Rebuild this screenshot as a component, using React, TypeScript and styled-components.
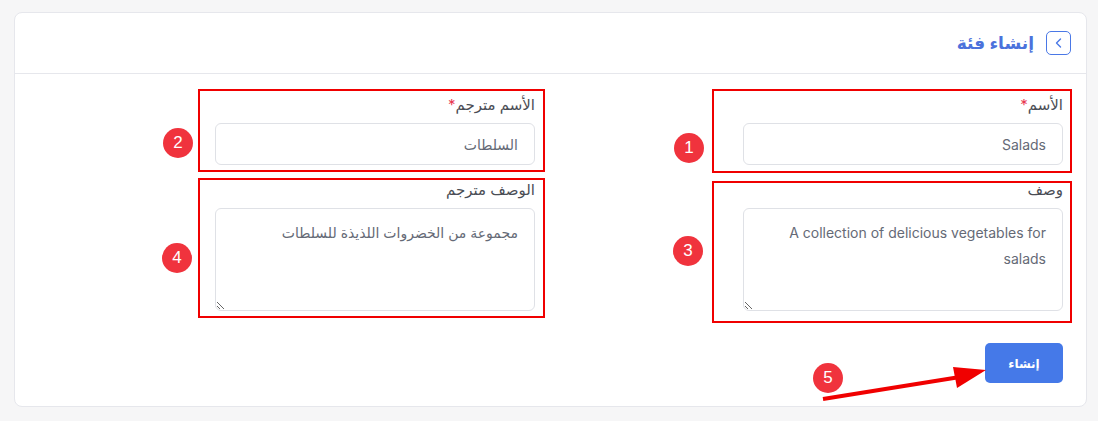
import React from "react";
import styled, { createGlobalStyle } from "styled-components";

const Global = createGlobalStyle`
  html, body { margin: 0; padding: 0; background: #f6f6f7; }
  body { font-family: Inter, "DejaVu Sans", sans-serif; }
  * { box-sizing: border-box; }
`;

const Page = styled.div`
  position: relative;
  width: 1098px;
  height: 421px;
  padding: 12px 11px 0 14px;
`;

const Card = styled.div`
  background: #fff;
  border: 1px solid #e6e7ec;
  border-radius: 8px;
  direction: rtl;
`;

const Header = styled.div`
  height: 61px;
  display: flex;
  align-items: center;
  gap: 12px;
  padding: 0 15px;
  border-bottom: 1px solid #e6e7ec;
`;

const BackBtn = styled.button`
  width: 25px;
  height: 24px;
  border: 1px solid #4a78e6;
  border-radius: 5px;
  background: #fff;
  display: flex;
  align-items: center;
  justify-content: center;
  padding: 0;
  color: #4a78e6;
`;

const Title = styled.h1`
  margin: 0;
  font-size: 17px;
  font-weight: 600;
  color: #4b72dc;
`;

const Body = styled.div`
  padding: 21px 23px 23px 0;
  display: grid;
  grid-template-columns: 320px 320px;
  column-gap: 208px;
  row-gap: 15px;
  justify-content: start;
`;

const Field = styled.div`
  display: flex;
  flex-direction: column;
`;

const Label = styled.label`
  font-size: 15px;
  line-height: 20px;
  color: #4a4d55;
  margin-bottom: 8px;
`;

const Req = styled.span`
  color: #e8384f;
`;

const Input = styled.input`
  height: 42px;
  border: 1px solid #dfe1e6;
  border-radius: 6px;
  padding: 0 16px;
  font-family: inherit;
  font-size: 14px;
  color: #656a76;
  direction: rtl;
  outline: none;
`;

const TextArea = styled.textarea`
  height: 103px;
  border: 1px solid #dfe1e6;
  border-radius: 6px;
  padding: 11px 16px;
  font-family: inherit;
  font-size: 14px;
  line-height: 26px;
  color: #656a76;
  direction: rtl;
  resize: vertical;
  outline: none;
`;

const Actions = styled.div`
  grid-column: 1 / 2;
  display: flex;
  justify-content: flex-start;
  padding-top: 17px;
`;

const Submit = styled.button`
  width: 78px;
  height: 40px;
  border: none;
  border-radius: 5px;
  background: #4579e8;
  color: #fff;
  font-family: inherit;
  font-size: 12px;
  font-weight: 700;
`;

const Mark = styled.div<{ $x: number; $y: number; $w: number; $h: number }>`
  position: absolute;
  left: ${(p) => p.$x}px;
  top: ${(p) => p.$y}px;
  width: ${(p) => p.$w}px;
  height: ${(p) => p.$h}px;
  border: 2px solid #f00000;
  pointer-events: none;
`;

const Badge = styled.div<{ $x: number; $y: number }>`
  position: absolute;
  left: ${(p) => p.$x - 15}px;
  top: ${(p) => p.$y - 15}px;
  width: 30px;
  height: 30px;
  border-radius: 50%;
  background: #f0333d;
  color: #fff;
  font-family: "Liberation Sans", Arial, sans-serif;
  font-size: 17px;
  display: flex;
  align-items: center;
  justify-content: center;
`;

const ArrowSvg = styled.svg`
  position: absolute;
  left: 0;
  top: 0;
  pointer-events: none;
`;

export default function App() {
  return (
    <>
      <Global />
      <Page>
        <Card>
          <Header>
            <BackBtn aria-label="back">
              <svg width="14" height="14" viewBox="0 0 14 14" fill="none">
                <path d="M8.5 3 L4.5 7 L8.5 11" stroke="currentColor" strokeWidth="1.4" strokeLinecap="round" strokeLinejoin="round" />
              </svg>
            </BackBtn>
            <Title>إنشاء فئة</Title>
          </Header>
          <Body>
            <Field>
              <Label>
                الأسم<Req>*</Req>
              </Label>
              <Input defaultValue="Salads" />
            </Field>
            <Field>
              <Label>
                الأسم مترجم<Req>*</Req>
              </Label>
              <Input defaultValue="السلطات" />
            </Field>
            <Field>
              <Label>وصف</Label>
              <TextArea defaultValue="A collection of delicious vegetables for salads" />
            </Field>
            <Field>
              <Label>الوصف مترجم</Label>
              <TextArea defaultValue="مجموعة من الخضروات اللذيذة للسلطات" />
            </Field>
            <Actions>
              <Submit>إنشاء</Submit>
            </Actions>
          </Body>
        </Card>

        <Mark $x={712} $y={89} $w={360} $h={84} />
        <Mark $x={198} $y={89} $w={347} $h={83} />
        <Mark $x={712} $y={181} $w={360} $h={142} />
        <Mark $x={198} $y={178} $w={347} $h={140} />
        <Badge $x={689} $y={148}>1</Badge>
        <Badge $x={178} $y={143}>2</Badge>
        <Badge $x={688} $y={251}>3</Badge>
        <Badge $x={177} $y={258}>4</Badge>
        <Badge $x={828} $y={378}>5</Badge>
        <ArrowSvg width="1098" height="421" viewBox="0 0 1098 421">
          <line x1="823" y1="399" x2="960" y2="377" stroke="#f00000" strokeWidth="4" />
          <polygon points="986,370 953,367 957,388" fill="#f00000" />
        </ArrowSvg>
      </Page>
    </>
  );
}
